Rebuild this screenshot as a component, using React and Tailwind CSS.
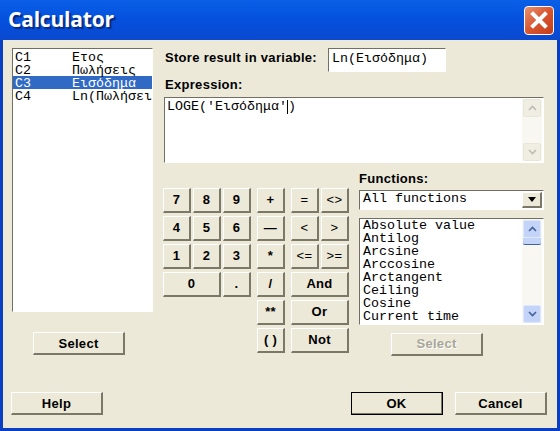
import React from 'react';

const sans = "font-['Liberation_Sans',sans-serif]";
const mono = "font-['Liberation_Mono',monospace]";
const sunken = "border-t border-l border-t-[#716f64] border-l-[#716f64] border-b border-r border-b-white border-r-white bg-white";
const functions = ['Absolute value', 'Antilog', 'Arcsine', 'Arccosine', 'Arctangent', 'Ceiling', 'Cosine', 'Current time'];
const columns = [['C1', 'Ετος'], ['C2', 'Πωλήσεις'], ['C3', 'Εισόδημα'], ['C4', 'Ln(Πωλήσει']];

const Btn = ({ children, className = '' }) => (
    <button className={`flex items-center justify-center bg-[#ece9d8] border-t border-l border-t-white border-l-white border-b-2 border-r-2 border-b-[#7b7868] border-r-[#7b7868] text-[13px] font-bold text-black tracking-[0.3px] ${sans} ${className}`}>
        {children}
    </button>
);

const Chevron = ({ up, color }) => (
    <svg width="9" height="6" viewBox="0 0 9 6" fill="none" stroke={color} strokeWidth="1.6">
        <path d={up ? 'M1 5 L4.5 1.5 L8 5' : 'M1 1 L4.5 4.5 L8 1'} />
    </svg>
);

const ScrollBtn = ({ up, active }) => (
    <div className={`w-[18px] h-[18px] rounded-[2px] flex items-center justify-center border ${active ? 'bg-[#c3d4f8] border-[#dfe8fb]' : 'bg-[#f0eee2] border-[#e8e6da]'}`}>
        <Chevron up={up} color={active ? '#44609c' : '#bdbcb2'} />
    </div>
);

const Keypad = () => (
    <div className="flex gap-[6px] items-start">
        <div className="grid grid-cols-[28px_28px_28px] auto-rows-[25px] gap-x-[2px] gap-y-[3px]">
            {['7', '8', '9', '4', '5', '6', '1', '2', '3'].map((k) => <Btn key={k}>{k}</Btn>)}
            <Btn className="col-span-2">0</Btn>
            <Btn>.</Btn>
        </div>
        <div className="grid grid-cols-[28px] auto-rows-[25px] gap-y-[3px]">
            {['+', '—', '*', '/', '**', '( )'].map((k) => <Btn key={k}>{k}</Btn>)}
        </div>
        <div className="grid grid-cols-[28px_28px] auto-rows-[25px] gap-x-[2px] gap-y-[3px]">
            {['=', '<>', '<', '>', '<=', '>='].map((k) => <Btn key={k} className="!font-normal">{k}</Btn>)}
            <Btn className="col-span-2">And</Btn>
            <Btn className="col-span-2">Or</Btn>
            <Btn className="col-span-2">Not</Btn>
        </div>
    </div>
);

export default function App() {
    return (
        <div className="w-[560px] h-[431px] flex flex-col overflow-hidden bg-[#0a3fc4]">
            {/* Title bar */}
            <div className="h-[40px] shrink-0 flex items-center justify-between pl-[8px] pr-[6px] bg-gradient-to-b from-[#0a5fe6] via-[#0550dd] to-[#0a49cf]">
                <span className="text-[21px] font-bold text-white font-['Open_Sans',sans-serif] [text-shadow:2px_2px_1px_#0a2a80] tracking-[-0.2px]">Calculator</span>
                <div className="w-[30px] h-[29px] rounded-[4px] border border-white flex items-center justify-center bg-gradient-to-br from-[#e8906f] via-[#d9552f] to-[#c23c17]">
                    <svg width="18" height="18" viewBox="0 0 18 18" stroke="white" strokeWidth="4" strokeLinecap="square">
                        <path d="M3 3 L15 15 M15 3 L3 15" />
                    </svg>
                </div>
            </div>

            {/* Dialog body */}
            <div className="flex-1 mx-[3px] mb-[3px] bg-[#ece9d8] flex flex-col">
                <div className="flex pt-[8px] h-[352px]">
                    {/* Column list */}
                    <div className="w-[141px] ml-[9px] shrink-0 flex flex-col">
                        <div className={`h-[264px] pt-[1px] ${sunken} ${mono} text-[13.33px] leading-[13px] text-black`}>
                            {columns.map(([id, name]) => (
                                <div key={id} className={`flex h-[13px] pl-[2px] pt-[1px] whitespace-nowrap ${id === 'C3' ? 'bg-[#316ac5] text-white' : ''}`}>
                                    <span className="w-[57px] shrink-0">{id}</span>
                                    <span>{name}</span>
                                </div>
                            ))}
                        </div>
                        <Btn className="w-[92px] h-[23px] ml-[21px] mt-[20px] pt-[1px]">Select</Btn>
                    </div>

                    {/* Right side */}
                    <div className="ml-[11px] w-[382px] flex flex-col">
                        <div className="flex items-center h-[24px]">
                            <span className={`text-[13px] leading-[20px] -mt-[4px] pl-[1px] font-bold tracking-[0.3px] text-black w-[164px] shrink-0 ${sans}`}>Store result in variable:</span>
                            <div className={`w-[118px] h-[24px] pl-[3px] pt-[2px] ${sunken} ${mono} text-[13.33px] leading-[16px] text-black`}>Ln(Εισόδημα)</div>
                        </div>
                        <div className={`mt-[3px] h-[22px] pl-[1px] leading-[20px] text-[13px] font-bold tracking-[0.3px] text-black ${sans}`}>Expression:</div>
                        <div className={`h-[66px] w-[380px] flex justify-between pl-[2px] pr-[1px] py-[1px] ${sunken} ${mono} text-[13.33px] leading-[16px] text-black`}>
                            <div className="flex items-start">LOGE('Εισόδημα'<span className="w-px h-[14px] mt-[1px] bg-black" />)</div>
                            <div className="w-[20px] flex flex-col justify-between items-center bg-[#f8f7f1]">
                                <ScrollBtn up />
                                <ScrollBtn />
                            </div>
                        </div>

                        <div className="flex mt-[25px] -ml-[1px] items-start">
                            <Keypad />
                            <div className="ml-[10px] -mt-[16px] w-[185px] flex flex-col">
                                <div className={`h-[14px] leading-[14px] text-[13px] font-bold tracking-[0.3px] text-black ${sans}`}>Functions:</div>
                                <div className={`mt-[4px] h-[20px] flex items-center justify-between pl-[3px] pr-[1px] ${sunken} ${mono} text-[13.33px] leading-[14px] text-black`}>
                                    <span className="-mt-[2px]">All functions</span>
                                    <div className="w-[20px] h-[16px] flex items-center justify-center bg-[#ece9d8] border-t border-l border-t-white border-l-white border-b-2 border-r-2 border-b-[#7b7868] border-r-[#7b7868]">
                                        <svg width="8" height="5" viewBox="0 0 8 5"><path d="M0 0 H8 L4 5 Z" fill="black" /></svg>
                                    </div>
                                </div>
                                <div className={`mt-[8px] h-[107px] flex justify-between pl-[3px] pr-[1px] pb-[1px] ${sunken} ${mono} text-[13.33px] leading-[13px] text-black`}>
                                    <div>
                                        {functions.map((f) => <div key={f} className="h-[13px] whitespace-nowrap">{f}</div>)}
                                    </div>
                                    <div className="w-[20px] pt-[1px] flex flex-col items-center bg-[#f8f7f1]">
                                        <ScrollBtn up active />
                                        <div className="w-[18px] h-[7px] rounded-b-[2px] bg-[#c3d4f8] border-b border-b-[#44609c]" />
                                        <div className="flex-1" />
                                        <ScrollBtn active />
                                    </div>
                                </div>
                                <Btn className="w-[92px] h-[23px] ml-[32px] mt-[8px] !text-[#a7a698] [text-shadow:1px_1px_0_#ffffff]">Select</Btn>
                            </div>
                        </div>
                    </div>
                </div>

                {/* Footer buttons */}
                <div className="flex justify-between pl-[8px] pr-[10px]">
                    <Btn className="w-[92px] h-[23px] pt-[1px]">Help</Btn>
                    <div className="flex gap-[12px]">
                        <Btn className="w-[92px] h-[23px] pt-[1px] outline outline-1 outline-black outline-offset-[-1px]">OK</Btn>
                        <Btn className="w-[92px] h-[23px] pt-[1px]">Cancel</Btn>
                    </div>
                </div>
            </div>
        </div>
    );
}
